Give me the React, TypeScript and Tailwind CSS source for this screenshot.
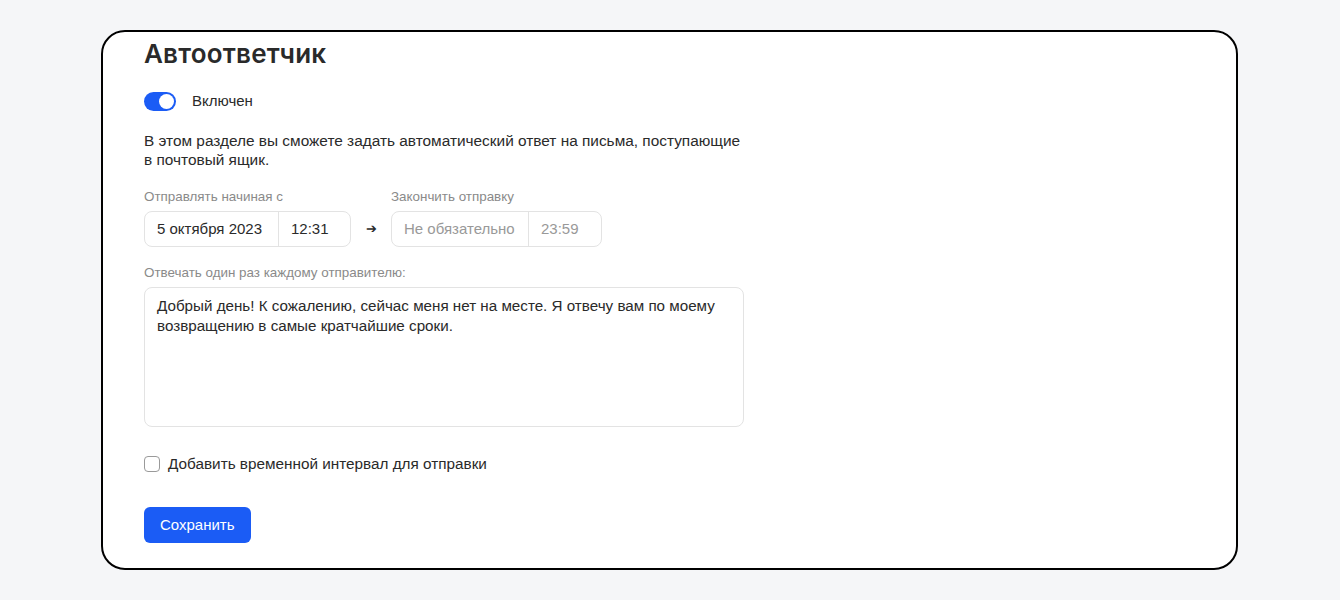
import React from "react";

export default function App() {
  return (
    <div className="w-[1340px] h-[600px] bg-[#f5f6f8] pt-[30px] pl-[101px]" style={{ fontFamily: '"Liberation Sans", Arial, sans-serif' }}>
      <div className="w-[1137px] h-[540px] border-2 border-black rounded-[24px] bg-white pl-[41px] pt-[6px]">
        <h1 className="text-[26px] leading-[32px] font-semibold text-[#2a2a2a] tracking-[0.2px]" style={{ fontFamily: 'Inter, "Noto Sans", sans-serif' }}>
          Автоответчик
        </h1>
        <div className="flex items-center mt-[21px] h-[20px]">
          <div className="w-[32px] h-[19px] rounded-full bg-[#1b5cf5] flex items-center justify-end pr-[2px]">
            <div className="w-[15px] h-[15px] rounded-full bg-white" />
          </div>
          <span className="ml-[16px] text-[15px] text-[#2a2a2a]">Включен</span>
        </div>
        <p className="mt-[20px] w-[660px] whitespace-nowrap text-[15.4px] leading-[19px] text-[#2a2a2a]">
          В этом разделе вы сможете задать автоматический ответ на письма, поступающие
          <br />
          в почтовый ящик.
        </p>
        <div className="flex items-end mt-[20px]">
          <div className="flex flex-col">
            <span className="text-[13.4px] leading-[16px] text-[#8a8a8a]">Отправлять начиная с</span>
            <div className="mt-[6px] flex h-[36px] border border-[#e3e3e3] rounded-[8px] text-[15px] text-[#2a2a2a]">
              <div className="w-[133px] flex items-center pl-[12px]">5 октября 2023</div>
              <div className="w-[72px] flex items-center pl-[12px] border-l border-[#e3e3e3]">12:31</div>
            </div>
          </div>
          <div className="w-[40px] h-[36px] flex items-center justify-center text-[13px] text-[#2a2a2a]">➔</div>
          <div className="flex flex-col">
            <span className="text-[13.4px] leading-[16px] text-[#8a8a8a]">Закончить отправку</span>
            <div className="mt-[6px] flex h-[36px] border border-[#e3e3e3] rounded-[8px] text-[15px] text-[#999]">
              <div className="w-[136px] flex items-center pl-[12px]">Не обязательно</div>
              <div className="w-[73px] flex items-center pl-[12px] border-l border-[#e3e3e3]">23:59</div>
            </div>
          </div>
        </div>
        <div className="mt-[18px] text-[13.4px] leading-[16px] text-[#8a8a8a]">Отвечать один раз каждому отправителю:</div>
        <div className="mt-[6px] w-[600px] h-[140px] border border-[#e3e3e3] rounded-[8px] px-[12px] pt-[8px] text-[15.2px] leading-[20px] text-[#2a2a2a]">
          Добрый день! К сожалению, сейчас меня нет на месте. Я отвечу вам по моему возвращению в самые кратчайшие сроки.
        </div>
        <label className="mt-[27px] h-[20px] flex items-center">
          <span className="w-[16px] h-[16px] border border-[#9a9a9a] rounded-[4px] bg-white" />
          <span className="ml-[8px] text-[15.3px] text-[#2a2a2a]">Добавить временной интервал для отправки</span>
        </label>
        <button className="mt-[33px] h-[36px] px-[16px] rounded-[6px] bg-[#1b5cf5] text-white text-[15px]">
          Сохранить
        </button>
      </div>
    </div>
  );
}
